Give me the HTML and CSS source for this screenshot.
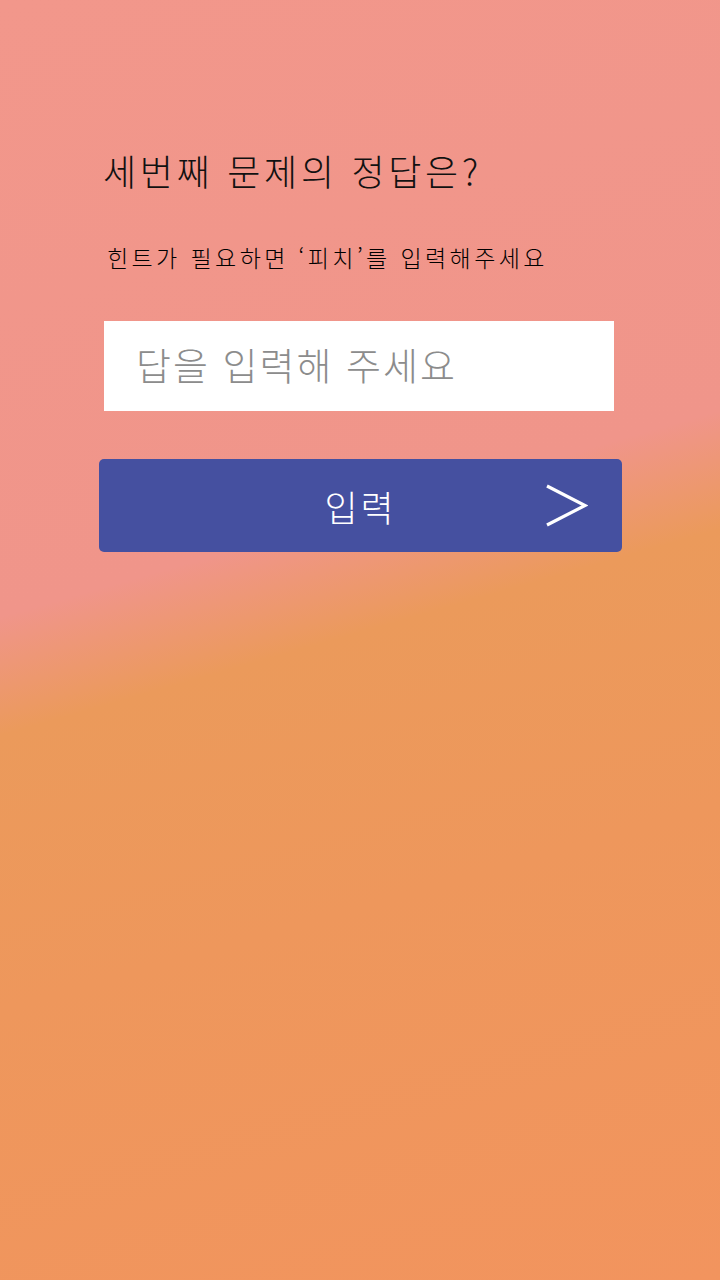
FILE: index.html
```html
<!DOCTYPE html>
<html lang="ko">
<head>
<meta charset="utf-8">
<link rel="stylesheet" href="styles.css">
</head>
<body>
<main class="screen">
  <h1 class="question">세번째 문제의 정답은?</h1>
  <p class="hint">힌트가 필요하면 ‘피치’를 입력해주세요</p>
  <div class="answer-box">
    <input class="answer" type="text" placeholder="답을 입력해 주세요">
  </div>
  <button class="submit" type="button">
    <span class="submit-label">입력</span>
    <svg class="chevron" width="42" height="44" viewBox="0 0 42 44" aria-hidden="true">
      <polyline points="1,2 39,21.5 1,41" fill="none" stroke="#ffffff" stroke-width="3.2"/>
    </svg>
  </button>
</main>
</body>
</html>
```

FILE: styles.css
```css
* { box-sizing: border-box; }
html, body { margin: 0; padding: 0; }
body {
  width: 720px;
  height: 1280px;
  overflow: hidden;
  font-family: "Noto Sans CJK KR", "Noto Sans", sans-serif;
  background: linear-gradient(164deg, #f2978b 0%, #f0958a 41.5%, #eb9a5b 49.5%, #ee975c 68%, #f2945e 100%);
}
.screen {
  display: flex;
  flex-direction: column;
  padding: 146px 98px 0 99px;
}
.question {
  margin: 0 0 0 4px;
  font-size: 36px;
  font-weight: 300;
  letter-spacing: 3.7px;
  line-height: 48px;
  color: #111;
}
.hint {
  margin: 47px 0 0 8px;
  font-size: 23px;
  font-weight: 300;
  letter-spacing: 3.4px;
  line-height: 32px;
  color: #000;
}
.answer-box {
  margin: 48px 8px 0 5px;
  height: 90px;
  background: #fff;
  display: flex;
  align-items: center;
}
.answer {
  width: 100%;
  height: 100%;
  border: none;
  outline: none;
  background: transparent;
  padding: 0 0 6px 32px;
  font-family: inherit;
  font-size: 38px;
  font-weight: 300;
  letter-spacing: 2px;
  color: #333;
}
.answer::placeholder { color: #8c8c8c; }
.submit {
  margin-top: 48px;
  height: 93px;
  border: none;
  border-radius: 5px;
  background: #4550a0;
  display: flex;
  align-items: center;
  justify-content: center;
  position: relative;
  font-family: inherit;
  padding: 0;
}
.submit-label {
  font-size: 36px;
  font-weight: 300;
  letter-spacing: 3px;
  color: #fff;
  line-height: 1;
}
.chevron {
  position: absolute;
  right: 34px;
  top: 25px;
}
```
